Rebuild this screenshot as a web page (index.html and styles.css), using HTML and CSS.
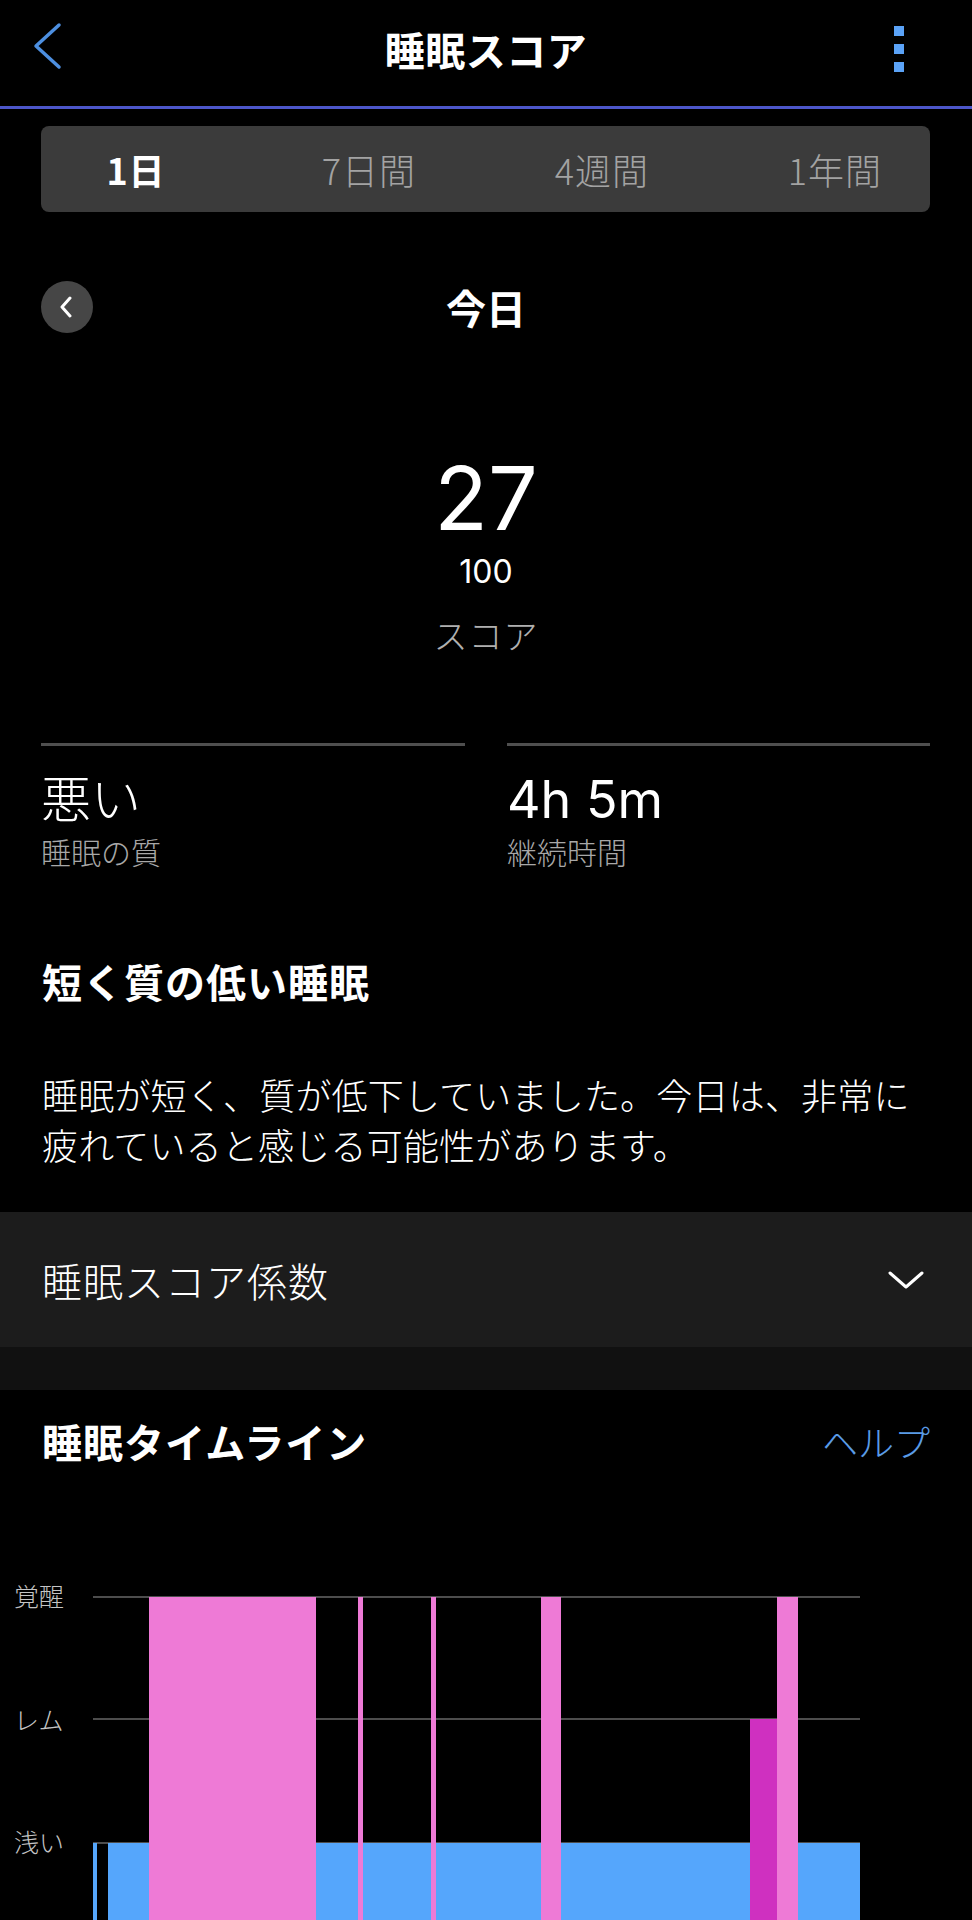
FILE: index.html
```html
<!DOCTYPE html>
<html lang="ja">
<head>
<meta charset="utf-8">
<title>睡眠スコア</title>
<link rel="stylesheet" href="styles.css">
</head>
<body>
<div class="screen">
  <header class="topbar">
    <div class="topbar-left">
      <svg class="back-icon" width="30" height="48" viewBox="0 0 30 48"><path d="M27 3 L4 24 L27 45" fill="none" stroke="#4d8fe0" stroke-width="3.5" stroke-linecap="round" stroke-linejoin="round"/></svg>
    </div>
    <h1 class="topbar-title">睡眠スコア</h1>
    <div class="topbar-right">
      <div class="kebab"><span></span><span></span><span></span></div>
    </div>
  </header>

  <nav class="range-tabs">
    <div class="range-grid">
      <span class="tab tab-active">1日</span>
      <span class="tab">7日間</span>
      <span class="tab">4週間</span>
      <span class="tab">1年間</span>
    </div>
  </nav>

  <div class="date-row">
    <div class="date-left">
      <span class="prev-btn"><svg width="14" height="22" viewBox="0 0 14 22"><path d="M11 2 L3 11 L11 20" fill="none" stroke="#ffffff" stroke-width="3" stroke-linecap="round" stroke-linejoin="round"/></svg></span>
    </div>
    <div class="date-title">今日</div>
    <div class="date-right"></div>
  </div>

  <section class="score">
    <div class="score-value">27</div>
    <div class="score-max">100</div>
    <div class="score-label">スコア</div>
  </section>

  <section class="stats">
    <div class="stat">
      <div class="stat-value">悪い</div>
      <div class="stat-label">睡眠の質</div>
    </div>
    <div class="stat">
      <div class="stat-value stat-num">4h 5m</div>
      <div class="stat-label">継続時間</div>
    </div>
  </section>

  <section class="summary">
    <h2 class="summary-title">短く質の低い睡眠</h2>
    <p class="summary-text">睡眠が短く、質が低下していました。今日は、非常に疲れていると感じる可能性があります。</p>
  </section>

  <div class="factors">
    <span class="factors-title">睡眠スコア係数</span>
    <svg width="36" height="18" viewBox="0 0 36 18"><path d="M2 2 L18 16 L34 2" fill="none" stroke="#ffffff" stroke-width="3" stroke-linecap="round" stroke-linejoin="round"/></svg>
  </div>
  <div class="band"></div>

  <section class="timeline">
    <div class="timeline-head">
      <h2 class="timeline-title">睡眠タイムライン</h2>
      <span class="help">ヘルプ</span>
    </div>
    <div class="chart">
      <span class="axis-label" style="top:20px">覚醒</span>
      <span class="axis-label" style="top:144px">レム</span>
      <span class="axis-label" style="top:266px">浅い</span>
      <div class="gridline" style="top:36px"></div>
      <div class="gridline" style="top:158px"></div>
      <div class="gridline" style="top:282px"></div>

      <div class="bar bar-light" style="left:93px;width:4px"></div>
      <div class="bar bar-light" style="left:108px;width:752px"></div>
      <div class="bar bar-awake" style="left:149px;width:167px"></div>
      <div class="bar bar-awake" style="left:358px;width:5px"></div>
      <div class="bar bar-awake" style="left:431px;width:5px"></div>
      <div class="bar bar-awake" style="left:541px;width:20px"></div>
      <div class="bar bar-rem" style="left:750px;width:27px"></div>
      <div class="bar bar-awake" style="left:777px;width:21px"></div>
    </div>
  </section>
</div>
</body>
</html>
```

FILE: styles.css
```css
html, body {
  margin: 0;
  padding: 0;
  background: #000;
}

body {
  color: #fff;
  font-family: "Noto Sans CJK JP", "Noto Sans", sans-serif;
  font-weight: 300;
}

.screen {
  width: 972px;
  height: 1920px;
  overflow: hidden;
  background: #000;
}

/* top bar */
.topbar {
  display: grid;
  grid-template-columns: 1fr auto 1fr;
  align-items: center;
  height: 98px;
  padding-bottom: 8px;
  border-bottom: 3px solid #4c56c9;
}

.topbar-left {
  display: flex;
  padding-left: 32px;
}

.back-icon {
  display: block;
  margin-top: -6px;
}

.topbar-title {
  margin: 0;
  font-size: 40px;
  font-weight: 700;
  line-height: 48px;
  letter-spacing: 0.5px;
}

.topbar-right {
  display: flex;
  justify-content: flex-end;
  padding-right: 68px;
}

.kebab {
  display: flex;
  flex-direction: column;
  gap: 8px;
}

.kebab span {
  display: block;
  width: 10px;
  height: 10px;
  background: #5ba3f7;
}

/* range tabs */
.range-tabs {
  margin: 17px 42px 0 41px;
  height: 86px;
  background: #3b3b3b;
  border-radius: 8px;
  display: flex;
  align-items: center;
  justify-content: center;
}

.range-grid {
  flex: none;
  display: grid;
  grid-template-columns: repeat(4, 233px);
}

.tab {
  text-align: center;
  font-size: 36px;
  line-height: 44px;
  color: #a3a3a3;
  letter-spacing: 1px;
}

.tab-active {
  color: #fff;
  font-weight: 700;
}

/* date row */
.date-row {
  display: grid;
  grid-template-columns: 1fr auto 1fr;
  align-items: center;
  height: 52px;
  margin-top: 69px;
  padding: 0 41px;
}

.date-left {
  display: flex;
}

.prev-btn {
  width: 52px;
  height: 52px;
  border-radius: 50%;
  background: #464646;
  display: flex;
  align-items: center;
  justify-content: center;
}

.prev-btn svg {
  display: block;
  margin-left: -2px;
}

.date-title {
  font-size: 40px;
  font-weight: 700;
  line-height: 48px;
}

/* score */
.score {
  display: flex;
  flex-direction: column;
  align-items: center;
}

.score-value {
  margin-top: 121px;
  font-family: Inter, "Liberation Sans", sans-serif;
  font-weight: 400;
  font-size: 88px;
  line-height: 88px;
}

.score-max {
  margin-top: 14px;
  font-family: Inter, "Liberation Sans", sans-serif;
  font-weight: 400;
  font-size: 32px;
  line-height: 32px;
}

.score-label {
  margin-top: 27px;
  font-size: 34px;
  line-height: 40px;
  color: #b0b0b0;
  letter-spacing: 1px;
}

/* stats */
.stats {
  display: grid;
  grid-template-columns: 424px 423px;
  column-gap: 42px;
  margin: 88px 42px 0 41px;
}

.stat {
  border-top: 3px solid #4f4f4f;
  padding-top: 22px;
}

.stat-value {
  font-size: 50px;
  line-height: 56px;
}

.stat-num {
  font-family: Inter, "Liberation Sans", sans-serif;
  font-weight: 400;
  font-size: 52px;
  padding-top: 4px;
  margin-bottom: -4px;
}

.stat-label {
  margin-top: 9px;
  font-size: 30px;
  line-height: 36px;
  color: #a8a8a8;
}

/* summary */
.summary {
  padding: 0 42px;
}

.summary-title {
  margin: 88px 0 0;
  font-size: 40px;
  font-weight: 700;
  line-height: 48px;
  letter-spacing: 1px;
}

.summary-text {
  margin: 64px 0 0;
  font-size: 36px;
  line-height: 50px;
  letter-spacing: 0.2px;
}

/* factors */
.factors {
  margin-top: 43px;
  height: 135px;
  background: #1c1c1c;
  display: flex;
  align-items: center;
  justify-content: space-between;
  padding: 0 48px 0 42px;
}

.factors-title {
  font-size: 40px;
  line-height: 48px;
  letter-spacing: 1px;
}

.factors svg {
  display: block;
}

.band {
  height: 43px;
  background: #111;
}

/* timeline */
.timeline-head {
  display: flex;
  justify-content: space-between;
  align-items: center;
  padding: 27px 42px 0 42px;
}

.timeline-title {
  margin: 0;
  font-size: 40px;
  font-weight: 700;
  line-height: 48px;
  letter-spacing: 1px;
}

.help {
  font-size: 36px;
  line-height: 48px;
  color: #5a9be6;
}

.chart {
  position: relative;
  margin-top: 95px;
  height: 360px;
}

.axis-label {
  position: absolute;
  left: 14px;
  font-size: 25px;
  line-height: 30px;
  color: #c4c4c4;
}

.gridline {
  position: absolute;
  left: 93px;
  width: 767px;
  height: 2px;
  background: #4d4d4d;
}

.bar {
  position: absolute;
  bottom: 0;
}

.bar-light {
  top: 283px;
  background: #55a6fc;
}

.bar-awake {
  top: 37px;
  background: #ee7ad6;
}

.bar-rem {
  top: 159px;
  background: #cf30c0;
}
```
